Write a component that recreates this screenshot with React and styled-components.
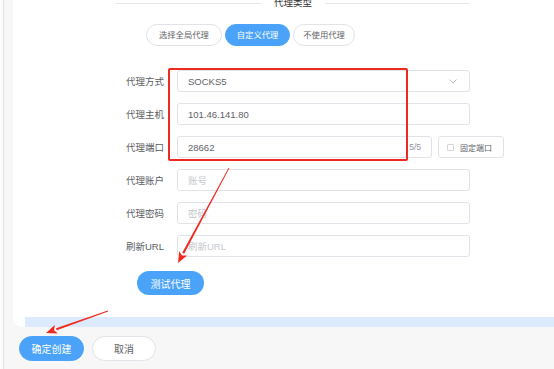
import React from "react";
import styled, { createGlobalStyle } from "styled-components";

const Global = createGlobalStyle`
  html, body { margin: 0; padding: 0; background: #f7f7f8; }
  body { font-family: "Liberation Sans", "Noto Sans CJK SC", sans-serif; -webkit-font-smoothing: antialiased; }
  * { box-sizing: border-box; }
`;

const Page = styled.div`
  position: relative;
  display: flex;
  width: 554px;
  height: 369px;
  overflow: hidden;
  background: #f7f7f8;
`;

const Rail = styled.div`
  width: 4px;
  flex: none;
  background: #fcfcfd;
  border-right: 1px solid #e2e3e8;
`;

const Main = styled.div`
  flex: 1;
  display: flex;
  flex-direction: column;
  padding-left: 9px;
  min-width: 0;
`;

const Card = styled.div`
  height: 327px;
  background: #fff;
  border-bottom-left-radius: 9px;
  display: flex;
  flex-direction: column;
  overflow: hidden;
`;

const Divider = styled.div`
  margin: -4px 0 0 103px;
  width: 354px;
  display: flex;
  align-items: center;
  gap: 13px;
  font-size: 9.5px;
  line-height: 14px;
  color: #303133;
  &::before, &::after {
    content: "";
    flex: 1;
    height: 1px;
    background: #e6e7eb;
  }
`;

const RadioGroup = styled.div`
  display: flex;
  gap: 3px;
  margin: 14px 0 0 133px;
`;

const Pill = styled.button`
  height: 22px;
  padding: 0 ${(p) => p.$pad}px;
  border-radius: 11px;
  font-family: inherit;
  font-size: 8.3px;
  line-height: 20px;
  border: 1px solid ${(p) => (p.$active ? "#4aa3f8" : "#e1e3e8")};
  background: ${(p) => (p.$active ? "#4aa3f8" : "#fff")};
  color: ${(p) => (p.$active ? "#fff" : "#5f6166")};
  cursor: pointer;
`;

const Form = styled.div`
  display: flex;
  flex-direction: column;
  gap: 11px;
  margin: 24px 0 0 0;
`;

const Row = styled.div`
  display: flex;
  align-items: center;
  height: 22px;
`;

const Label = styled.label`
  width: 164px;
  padding-right: 13px;
  text-align: right;
  font-size: 9.5px;
  color: #5a5c61;
  flex: none;
`;

const Field = styled.div`
  position: relative;
  width: ${(p) => p.$w}px;
  height: 22px;
  border: 1px solid #e1e3e8;
  border-radius: 3px;
  background: #fff;
  display: flex;
  align-items: center;
  padding: 0 10px 0 10px;
  font-size: 9.5px;
  color: ${(p) => (p.$ph ? "#c6c8cd" : "#5f6166")};
`;

const FieldText = styled.span`
  flex: 1;
`;

const Suffix = styled.span`
  font-size: 8.5px;
  color: #909399;
`;

const Chevron = styled.svg`
  width: 8px;
  height: 5px;
  margin-right: 2px;
`;

const CheckBox = styled.div`
  margin-left: 6px;
  width: 66px;
  height: 22px;
  border: 1px solid #e1e3e8;
  border-radius: 3px;
  display: flex;
  align-items: center;
  padding-left: 8px;
  gap: 6px;
  font-size: 8px;
  color: #606266;
`;

const Square = styled.span`
  width: 7px;
  height: 7px;
  border: 1px solid #d4d6db;
  border-radius: 1px;
`;

const TestButton = styled.button`
  margin: 14px 0 0 124px;
  width: 67px;
  height: 24px;
  border: none;
  border-radius: 12px;
  background: #4aa3f8;
  color: #fff;
  font-family: inherit;
  font-size: 10px;
  cursor: pointer;
`;

const ScrollBar = styled.div`
  margin: auto 0 0 12px;
  height: 10px;
  background: #dbeafd;
`;

const Footer = styled.div`
  display: flex;
  gap: 8px;
  padding: 9px 0 0 6px;
`;

const FooterButton = styled.button`
  width: ${(p) => p.$w}px;
  height: 25px;
  border-radius: 13px;
  font-family: inherit;
  font-size: 10px;
  border: 1px solid ${(p) => (p.$primary ? "#4aa3f8" : "#e1e3e8")};
  background: ${(p) => (p.$primary ? "#4aa3f8" : "#fff")};
  color: ${(p) => (p.$primary ? "#fff" : "#5f6166")};
  cursor: pointer;
`;

const Highlight = styled.div`
  position: absolute;
  left: 168px;
  top: 68px;
  width: 240px;
  height: 93px;
  border: 2px solid #ec2a20;
  border-radius: 2px;
  pointer-events: none;
`;

const Arrows = styled.svg`
  position: absolute;
  left: 0;
  top: 0;
  pointer-events: none;
`;

const rows = [
  { label: "代理方式", value: "SOCKS5", select: true },
  { label: "代理主机", value: "101.46.141.80" },
  { label: "代理端口", value: "28662", port: true },
  { label: "代理账户", value: "账号", ph: true },
  { label: "代理密码", value: "密码", ph: true },
  { label: "刷新URL", value: "刷新URL", ph: true },
];

function Arrow({ x1, y1, x2, y2 }) {
  const dx = x2 - x1;
  const dy = y2 - y1;
  const len = Math.hypot(dx, dy);
  const ux = dx / len;
  const uy = dy / len;
  const hl = 11;
  const hw = 4.5;
  const bx = x2 - ux * hl;
  const by = y2 - uy * hl;
  const px = -uy;
  const py = ux;
  return (
    <g fill="#ef2a1f" stroke="none">
      <polygon
        points={`${x1 - px * 0.4},${y1 - py * 0.4} ${x1 + px * 0.4},${y1 + py * 0.4} ${bx + px * 1.1},${by + py * 1.1} ${bx - px * 1.1},${by - py * 1.1}`}
      />
      <polygon
        points={`${x2},${y2} ${bx + px * hw},${by + py * hw} ${bx + ux * 2.5},${by + uy * 2.5} ${bx - px * hw},${by - py * hw}`}
      />
    </g>
  );
}

export default function App() {
  return (
    <Page>
      <Global />
      <Rail />
      <Main>
        <Card>
          <Divider>代理类型</Divider>
          <RadioGroup>
            <Pill $pad={12}>选择全局代理</Pill>
            <Pill $pad={11} $active>自定义代理</Pill>
            <Pill $pad={9}>不使用代理</Pill>
          </RadioGroup>
          <Form>
            {rows.map((r) => (
              <Row key={r.label}>
                <Label>{r.label}</Label>
                <Field $w={r.port ? 255 : 293} $ph={r.ph}>
                  <FieldText>{r.value}</FieldText>
                  {r.select && (
                    <Chevron viewBox="0 0 8 5">
                      <path d="M0.5 0.5 L4 4 L7.5 0.5" fill="none" stroke="#b4b7bd" strokeWidth="0.9" />
                    </Chevron>
                  )}
                  {r.port && <Suffix>5/5</Suffix>}
                </Field>
                {r.port && (
                  <CheckBox>
                    <Square />
                    固定端口
                  </CheckBox>
                )}
              </Row>
            ))}
          </Form>
          <TestButton>测试代理</TestButton>
          <ScrollBar />
        </Card>
        <Footer>
          <FooterButton $primary $w={65}>确定创建</FooterButton>
          <FooterButton $w={64}>取消</FooterButton>
        </Footer>
      </Main>
      <Highlight />
      <Arrows width="554" height="369" viewBox="0 0 554 369">
        <Arrow x1={229} y1={168} x2={178} y2={263} />
        <Arrow x1={108} y1={311} x2={46} y2={333} />
      </Arrows>
    </Page>
  );
}
